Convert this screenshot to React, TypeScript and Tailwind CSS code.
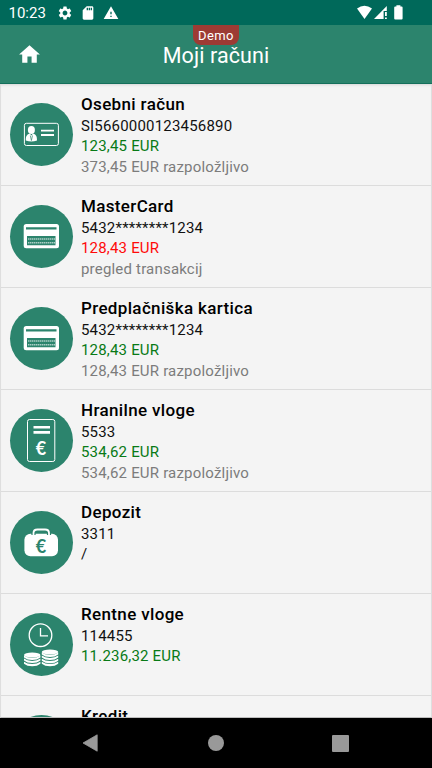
import type { ReactNode } from 'react'
import { MdHome, MdSdCard, MdSettings, MdWarning } from 'react-icons/md'

type Tone = 'positive' | 'negative' | 'plain'

interface Account {
  name: string
  number: string
  amount?: string
  tone?: Tone
  note?: string
  icon: ReactNode
}

const GREEN = '#2c846d'

const toneClass: Record<Tone, string> = {
  positive: 'text-[#087a16]',
  negative: 'text-[#ff0a0a]',
  plain: 'text-[#111111]',
}

const accounts: Account[] = [
  {
    name: 'Osebni račun',
    number: 'SI5660000123456890',
    amount: '123,45 EUR',
    tone: 'positive',
    note: '373,45 EUR razpoložljivo',
    icon: <IdCardIcon />,
  },
  {
    name: 'MasterCard',
    number: '5432********1234',
    amount: '128,43 EUR',
    tone: 'negative',
    note: 'pregled transakcij',
    icon: <PaymentCardIcon />,
  },
  {
    name: 'Predplačniška kartica',
    number: '5432********1234',
    amount: '128,43 EUR',
    tone: 'positive',
    note: '128,43 EUR razpoložljivo',
    icon: <PaymentCardIcon />,
  },
  {
    name: 'Hranilne vloge',
    number: '5533',
    amount: '534,62 EUR',
    tone: 'positive',
    note: '534,62 EUR razpoložljivo',
    icon: <SavingsIcon />,
  },
  { name: 'Depozit', number: '3311', amount: '/', tone: 'plain', icon: <DepositIcon /> },
  { name: 'Rentne vloge', number: '114455', amount: '11.236,32 EUR', tone: 'positive', icon: <AnnuityIcon /> },
  { name: 'Kredit', number: '', icon: null },
]

export default function App() {
  return (
    <div className="flex h-screen w-full flex-col overflow-hidden bg-[#f4f4f4] font-['Roboto',sans-serif]">
      <StatusBar />
      <Header />
      <main className="min-h-0 flex-1 overflow-hidden border-x border-b border-x-[#dedede] border-b-[#bdbdbd] shadow-[inset_0_3px_3px_-2px_rgba(0,0,0,0.12)]">
        {accounts.map(account => (
          <AccountRow key={account.name} account={account} />
        ))}
      </main>
      <NavBar />
    </div>
  )
}

function StatusBar() {
  return (
    <div className="flex h-[25px] shrink-0 items-center bg-[#00695a] pt-px pl-[8.5px] text-white">
      <span className="w-[48px] text-[15px] leading-none">10:23</span>
      <MdSettings className="h-4 w-4" />
      <MdSdCard className="ml-[7px] h-4 w-4" />
      <MdWarning className="ml-[7px] h-4 w-4" />
      <svg className="ml-auto h-[25px] w-[75px]" viewBox="357 1 75 25" fill="currentColor">
        <path d="M357 8.4Q364.4 3.2 372 8.4L364.5 19Z" />
        <path d="M386.8 6V11H383.6V19H374Z" />
        <path d="M385 12h1.8v4H385zM385 17.4h1.8V19H385z" />
        <path d="M396.4 6.6V5.2h4v1.4h1.2a1 1 0 0 1 1 1V18.6a1 1 0 0 1-1 1h-6.4a1 1 0 0 1-1-1V7.6a1 1 0 0 1 1-1z" />
      </svg>
    </div>
  )
}

function Header() {
  return (
    <header className="relative flex h-[59px] shrink-0 items-center border-b border-[#146f5b] bg-[#2c846d] text-white">
      <button className="ml-[17px]" aria-label="Domov">
        <MdHome className="h-[25px] w-[25px]" />
      </button>
      <h1 className="absolute inset-x-0 top-[17px] text-center text-[21.5px] leading-[28px] tracking-[0.1px]">
        Moji računi
      </h1>
      <span className="absolute top-0 left-[193px] h-5 w-[46px] rounded-b-[8px] bg-[#9d3b34] text-center text-[13px] leading-[21px] tracking-[0.4px]">
        Demo
      </span>
    </header>
  )
}

function AccountRow({ account }: { account: Account }) {
  return (
    <div className="flex h-[102px] border-b border-[#dcdcdc] pt-[10px] pl-[9px]">
      <div className="mt-[9px] h-[63px] w-[63px] shrink-0 rounded-full bg-[#2c846d]">
        <svg className="h-full w-full" viewBox="0 0 63 63" fill="none">
          {account.icon}
        </svg>
      </div>
      <div className="ml-2 text-[15px] leading-[20.4px] tracking-[0.19px] text-[#111111]">
        <h2 className="h-[22px] text-[17px] leading-[21px] font-medium tracking-[0.35px] text-black">{account.name}</h2>
        <p>{account.number}</p>
        {account.amount && <p className={toneClass[account.tone ?? 'plain']}>{account.amount}</p>}
        {account.note && <p className="text-[#7c7c7c]">{account.note}</p>}
      </div>
    </div>
  )
}

function IdCardIcon() {
  return (
    <>
      <rect x="14.4" y="20.3" width="34" height="22.2" rx="2" stroke="white" strokeWidth="1" />
      <ellipse cx="21.4" cy="27" rx="3.5" ry="4" fill="white" />
      <path d="M15.8 37.5c0-4.5 1-5.9 4.1-6.9l1.5 2 1.5-2c3.1 1 4.1 2.4 4.1 6.9Q21.4 39.5 15.8 37.5z" fill="white" />
      <path d="M20.3 32.5l1.1 5 1.1-5" stroke={GREEN} strokeWidth="0.7" />
      <path d="M31 27.7h13M31 32h13" stroke="white" strokeWidth="1.8" />
    </>
  )
}

function PaymentCardIcon() {
  return (
    <>
      <rect x="13.7" y="19" width="35.3" height="24.3" rx="2.5" fill="white" />
      <path d="M16 22.2h30.5v2.2H16zM17 31h28.5v9.3H17z" fill={GREEN} />
      <path d="M18 34H45M18 37.7H45" stroke="white" strokeOpacity="0.6" strokeWidth="1.5" strokeDasharray="1.5 0.5" />
    </>
  )
}

function SavingsIcon() {
  return (
    <>
      <rect x="17.5" y="10.5" width="27.3" height="42" rx="2" stroke="white" strokeWidth="1" />
      <path d="M23.5 18.2H40M23.5 23.4H40" stroke="white" strokeWidth="2.6" />
      <EuroSign y={46.2} color="white" />
    </>
  )
}

function DepositIcon() {
  return (
    <>
      <rect x="14.4" y="22.8" width="33.6" height="22.4" rx="6" fill="white" />
      <path d="M23.5 24v-2q0-3.5 4-3.5h7.5q4 0 4 3.5v2" stroke={GREEN} strokeWidth="4.2" />
      <path d="M23.5 24v-2q0-3.5 4-3.5h7.5q4 0 4 3.5v2" stroke="white" strokeWidth="1.8" />
      <EuroSign y={42} color={GREEN} />
    </>
  )
}

function EuroSign({ y, color }: { y: number; color: string }) {
  return (
    <text x="31" y={y} textAnchor="middle" className="font-['Lato',sans-serif] text-[18px] font-bold" fill={color}>
      €
    </text>
  )
}

function AnnuityIcon() {
  return (
    <>
      <circle cx="30.5" cy="22.2" r="11.3" stroke="white" strokeWidth="1.3" />
      <path d="M30.5 15v7.8h7.5" stroke="white" strokeWidth="1.3" />
      <CoinStack x={14} y={39.3} layers={3} />
      <CoinStack x={31.8} y={36.3} layers={4} />
    </>
  )
}

function CoinStack({ x, y, layers }: { x: number; y: number; layers: number }) {
  return (
    <g transform={`translate(${x} ${y})`}>
      {Array.from({ length: layers }, (_, i) => (
        <path
          key={i}
          d="M0 5.2v2q3 2.5 8.2 2.5t8.2-2.5v-2Q13.4 7.5 8.2 7.5T0 5.2z"
          transform={`translate(0 ${i * 3.1 - 2})`}
          fill="white"
        />
      ))}
      <ellipse cx="8.2" cy="2.6" rx="8.2" ry="2.5" fill="white" />
    </g>
  )
}

function NavBar() {
  return (
    <nav className="flex h-[50px] shrink-0 items-center justify-between bg-black pr-[83px] pl-[82px]">
      <svg className="h-[18px] w-4" viewBox="0 0 16 18">
        <path d="M1 9L15.2 0.8v16.4z" fill="#999" stroke="#999" strokeWidth="0.8" strokeLinejoin="round" />
      </svg>
      <div className="ml-px h-[16px] w-[16px] rounded-full bg-[#999]" />
      <div className="h-[17px] w-[17px] rounded-[1px] bg-[#999]" />
    </nav>
  )
}
